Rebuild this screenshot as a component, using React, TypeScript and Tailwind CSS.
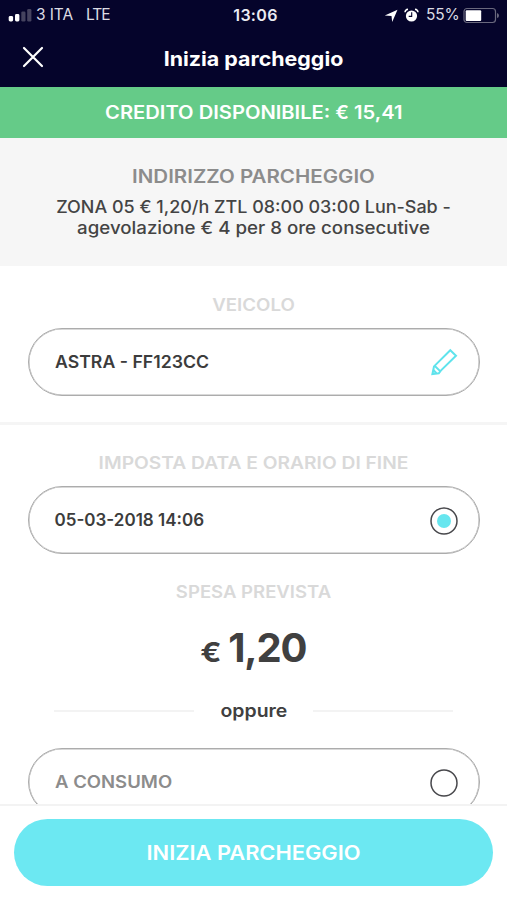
import type { ReactNode } from "react";

function StatusBar() {
  return (
    <div className="flex h-[30px] items-center pl-2 font-['Inter',sans-serif] text-[15.5px] leading-[30px] text-[#dcdce4]">
      <div className="flex w-[150px] items-center">
        <svg width="24" height="14" viewBox="0 0 24 14">
          <rect x="0.7" y="8" width="4.4" height="5.5" rx="1.4" fill="#fff" />
          <rect x="7" y="6" width="4.4" height="7.5" rx="1.4" fill="#fff" />
          <rect x="13.3" y="3.5" width="4.2" height="10" rx="1.2" fill="#45435f" />
          <rect x="19.2" y="1" width="4.2" height="12.5" rx="1.2" fill="#45435f" />
        </svg>
        <span className="ml-[4px] w-[50px] whitespace-nowrap tracking-[-0.1px]">3 ITA</span>
        <span className="tracking-[-1px]">LTE</span>
      </div>
      <div className="flex-1 pr-[31px] text-center text-[16px] font-semibold tracking-[0.3px] text-[#ececf2]">13:06</div>
      <div className="flex w-[123px] shrink-0 items-center">
        <svg width="14" height="14" viewBox="0 0 14 14" className="mt-px shrink-0">
          <path d="M13.5 .7 8.2 13 7.5 7 .8 6.5Z" fill="#fff" />
        </svg>
        <svg width="15" height="15" viewBox="0 0 15 15" className="ml-[6px] shrink-0">
          <circle cx="7.5" cy="8" r="5.6" fill="#fff" />
          <path d="M1 4.3Q1.2 1.5 4 1.2M11 1.2Q13.8 1.5 14 4.3" stroke="#fff" strokeWidth="1.5" fill="none" />
          <path d="M7.7 4.3V8.4H4.7" stroke="#05042b" strokeWidth="1.1" fill="none" />
        </svg>
        <span className="ml-[7px] w-[37px] tracking-[-0.2px]">55%</span>
        <svg width="37" height="17" viewBox="0 0 37 17" className="shrink-0">
          <rect x="1" y="1.5" width="31.5" height="14" rx="3" fill="none" stroke="#69687d" strokeWidth="1.2" />
          <rect x="2.7" y="3.3" width="15.5" height="10.6" rx="1" fill="#fff" />
          <path d="M34 6q2 .5 2 2.5t-2 2.5Z" fill="#69687d" />
        </svg>
      </div>
    </div>
  );
}

function PencilIcon() {
  return (
    <svg width="28" height="28" viewBox="0 0 28 28" fill="none" stroke="#5fe3ec" strokeWidth="2" strokeLinejoin="miter" className="mb-px">
      <path d="M20.3 2.2 26 7.8 10.8 22.6 8.8 25.3 2.4 26 4 18.4Z" />
      <path d="M4.6 17.8 10.4 23.4M3.4 22 6.4 25.2" />
    </svg>
  );
}

function Radio({ checked = false }: { checked?: boolean }) {
  return (
    <span className="mt-px">
      <svg width="28" height="28" viewBox="0 0 28 28">
        <circle cx="14" cy="14" r="13" fill="none" stroke="#48484c" strokeWidth="1.5" />
        {checked && <circle cx="14" cy="14" r="7" fill="#67e6ef" />}
      </svg>
    </span>
  );
}

function Pill({ children, icon }: { children: ReactNode; icon: ReactNode }) {
  return (
    <div className="mx-[27.5px] flex h-[68px] shrink-0 items-center justify-between rounded-full border border-[#acacac] pl-[26px] pr-[21px] pt-px text-[17px] font-semibold text-[#3c3c3c] shadow-[inset_0_0_0_0.5px_#b4b4b4]">
      {children}
      {icon}
    </div>
  );
}

export default function App() {
  return (
    <div className="flex h-[900px] w-full flex-col overflow-hidden bg-white font-['Inter',sans-serif]">
      <header className="h-[87px] shrink-0 bg-[#05042b] text-white">
        <StatusBar />
        <div className="grid h-[57px] grid-cols-[66px_1fr_66px] items-center">
          <svg width="22" height="22" viewBox="0 0 22 22" className="mb-[3px] ml-[22px]" stroke="#fff" strokeWidth="2.2" strokeLinecap="round">
            <path d="M2 2 20 20M20 2 2 20" />
          </svg>
          <h1 className="scale-x-[1.07] text-center text-[20px] font-bold">Inizia parcheggio</h1>
        </div>
      </header>

      <div className="h-[51px] shrink-0 bg-[#65cb88] text-center text-[18px] font-semibold leading-[51px] text-white">
        <span className="inline-block scale-x-[1.12]">CREDITO DISPONIBILE: € 15,41</span>
      </div>

      <section className="h-[128px] shrink-0 bg-[#f6f6f6] pt-[26px] text-center text-[#444]">
        <h2 className="scale-x-[1.14] text-[18px] font-semibold leading-[26px] text-[#8c8c8c]">INDIRIZZO PARCHEGGIO</h2>
        <p className="mt-[7px] text-[17px] font-medium leading-[21px]">
          <span className="block scale-x-[1.056]">ZONA 05 € 1,20/h ZTL 08:00 03:00 Lun-Sab -</span>
          <span className="block scale-x-[1.1]">agevolazione € 4 per 8 ore consecutive</span>
        </p>
      </section>

      <section className="h-[159px] shrink-0 border-b-[3px] border-[#f5f5f5] pt-[27px]">
        <h2 className="mb-[11px] scale-x-[1.1] text-center text-[17px] font-semibold leading-[24px] text-[#d9d9d9]">VEICOLO</h2>
        <Pill icon={<PencilIcon />}>
          <span className="origin-left scale-x-[1.04] pt-px">ASTRA - FF123CC</span>
        </Pill>
      </section>

      <section className="flex min-h-0 flex-1 flex-col overflow-hidden pt-[26px] text-center">
        <h2 className="mb-[11px] scale-x-[1.13] text-[17px] font-semibold leading-[24px] text-[#d9d9d9]">IMPOSTA DATA E ORARIO DI FINE</h2>
        <Pill icon={<Radio checked />}>
          <span>05-03-2018 14:06</span>
        </Pill>
        <h2 className="mt-[26px] scale-x-[1.09] text-[17px] font-semibold leading-[24px] text-[#d9d9d9]">SPESA PREVISTA</h2>
        <p className="mt-[19px] flex h-[50px] items-baseline justify-center gap-[7px] pl-[2px] font-bold leading-[50px] text-[#404040]">
          <span className="origin-right scale-x-[1.15] text-[27px]">€</span>
          <span className="text-[40px] tracking-[-1.2px]">1,20</span>
        </p>
        <div className="mx-[54px] mt-[26px] flex h-[24px] items-center justify-between">
          <span className="h-[2px] w-[140px] bg-[#f3f3f3]" />
          <span className="scale-x-[1.08] text-[18px] font-semibold leading-[24px] text-[#404040]">oppure</span>
          <span className="h-[2px] w-[140px] bg-[#f3f3f3]" />
        </div>
        <div className="h-[25px] shrink-0" />
        <Pill icon={<Radio />}>
          <span className="origin-left scale-x-[1.09] text-[#8c8c8c]">A CONSUMO</span>
        </Pill>
      </section>

      <footer className="h-[96px] shrink-0 border-t-2 border-[#f3f3f3] bg-white px-[14px] pt-[13px]">
        <button className="h-[67px] w-full rounded-full bg-[#6ce8f2] pt-[3px] text-[19.5px] font-semibold text-white">
          <span className="inline-block scale-x-[1.12]">INIZIA PARCHEGGIO</span>
        </button>
      </footer>
    </div>
  );
}
